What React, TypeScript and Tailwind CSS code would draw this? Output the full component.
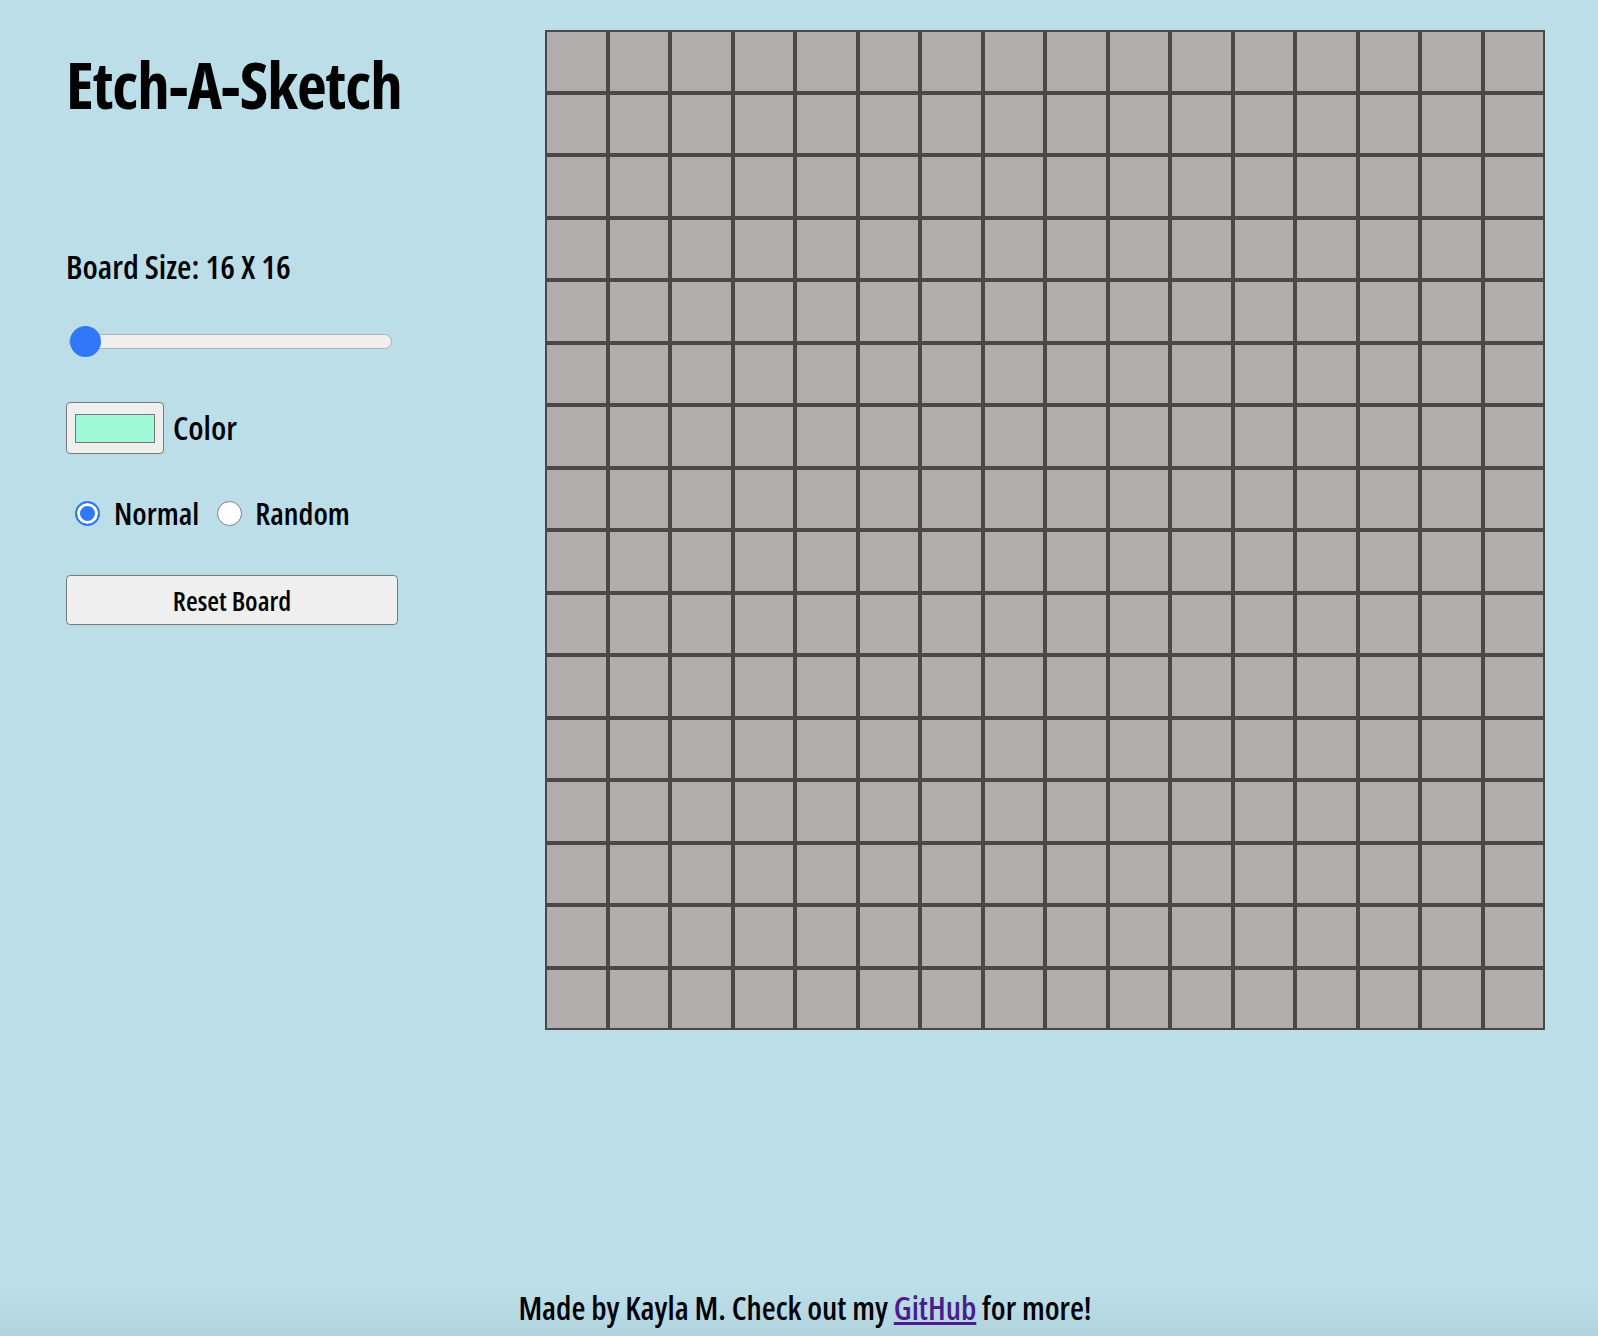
import { useState } from 'react';

const SIZE = 16;

export default function App() {
  const [mode, setMode] = useState<'normal' | 'random'>('normal');
  const [size, setSize] = useState(SIZE);
  const cells = Array.from({ length: size * size });

  return (
    <div className="min-h-screen bg-[#bcdee9] text-black font-['Open_Sans',sans-serif] [font-stretch:75%]">
      <div className="flex pt-[30px] pl-[66px]">
        {/* controls */}
        <aside className="w-[332px] shrink-0">
          <div className="h-[217px] pt-[22px]">
            <h1 className="text-[65px] leading-[64px] font-bold tracking-[-1px] whitespace-nowrap">Etch-A-Sketch</h1>
          </div>

          <p className="h-[40px] leading-[40px] text-[33px] font-semibold whitespace-nowrap">
            Board Size: {size} X {size}
          </p>

          <div className="mt-[38px] h-[32px] flex items-center">
            <input
              type="range"
              min={16}
              max={100}
              value={size}
              onChange={(e) => setSize(Number(e.target.value))}
              className="ml-[3px] w-[323px] h-[15px] appearance-none rounded-full bg-[#efefef] border border-[#b0b0b0] outline-none [&::-webkit-slider-thumb]:appearance-none [&::-webkit-slider-thumb]:w-[31px] [&::-webkit-slider-thumb]:h-[31px] [&::-webkit-slider-thumb]:rounded-full [&::-webkit-slider-thumb]:bg-[#3078f7] [&::-webkit-slider-thumb]:border-0"
            />
          </div>

          <div className="mt-[45px] h-[52px] flex items-center gap-[9px]">
            <button className="w-[98px] h-[52px] rounded-[4px] border-[1.5px] border-[#7a7a7a] bg-[#efefef] flex items-center justify-center">
              <span className="block w-[80px] h-[29px] bg-[#9ef9d6] border-[1.5px] border-[#777777]" />
            </button>
            <span className="text-[33px] font-semibold">Color</span>
          </div>

          <div className="mt-[44px] h-[30px] flex items-center">
            <label className="flex items-center ml-[9px]">
              <input
                type="radio"
                name="mode"
                checked={mode === 'normal'}
                onChange={() => setMode('normal')}
                className="appearance-none w-[25px] h-[25px] rounded-full bg-white border-[1.5px] border-[#808080] checked:border-2 checked:border-[#3078f7] checked:bg-[#3078f7] checked:shadow-[inset_0_0_0_3px_white]"
              />
              <span className="ml-[14px] text-[31px] font-semibold">Normal</span>
            </label>
            <label className="flex items-center ml-[18px]">
              <input
                type="radio"
                name="mode"
                checked={mode === 'random'}
                onChange={() => setMode('random')}
                className="appearance-none w-[25px] h-[25px] rounded-full bg-white border-[1.5px] border-[#808080] checked:border-2 checked:border-[#3078f7] checked:bg-[#3078f7] checked:shadow-[inset_0_0_0_3px_white]"
              />
              <span className="ml-[13px] text-[31px] font-semibold">Random</span>
            </label>
          </div>

          <button className="mt-[47px] w-[332px] h-[50px] rounded-[4px] border-[1.5px] border-[#7a7a7a] bg-[#efefef] text-[27px] font-semibold leading-none">
            Reset Board
          </button>
        </aside>

        {/* board */}
        <main className="ml-[147px]">
          <div className="grid grid-cols-16 w-[1000px] h-[1000px]">
            {cells.map((_, i) => (
              <div key={i} className="border-2 border-[#4a4848] bg-[#b1adac]" />
            ))}
          </div>
        </main>
      </div>

      <footer className="mt-[258px] h-[48px] pl-[12px] text-center text-[32px] font-semibold leading-[40px] whitespace-nowrap bg-linear-to-b from-[#bcdee9] to-[#b2d4df]">
        Made by Kayla M. Check out my{' '}
        <a href="#" className="text-[#4b1d8c] underline">GitHub</a> for more!
      </footer>
    </div>
  );
}
